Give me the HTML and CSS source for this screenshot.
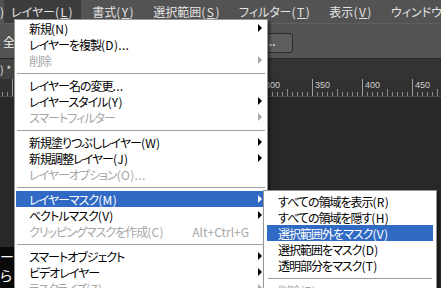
FILE: index.html
```html
<!DOCTYPE html>
<html>

	<head>
		<meta charset="UTF-8">
		<title></title>
		<link rel="stylesheet" href="styles.css">
	</head>

	<body>
		<div class="app">
			<div class="menubar">
				<span class="cut">)</span>
				<span class="item on">レイヤー<span class="k">(<u>L</u>)</span></span>
				<span class="item">書式<span class="k">(<u>Y</u>)</span></span>
				<span class="item">選択範囲<span class="k">(<u>S</u>)</span></span>
				<span class="item">フィルター<span class="k">(<u>T</u>)</span></span>
				<span class="item">表示<span class="k">(<u>V</u>)</span></span>
				<span class="item">ウィンドウ<span class="k">(<u>W</u>)</span></span>
			</div>
			<div class="options">
				<span class="opt-text">全</span>
				<span class="opt-btn">...</span>
			</div>
			<div class="tabs">
				<span class="tab">) *</span>
			</div>
			<div class="ruler">
				<div class="marks">
					<span>0</span>
					<span>50</span>
					<span>100</span>
					<span>150</span>
					<span>200</span>
					<span>250</span>
					<span>300</span>
					<span>350</span>
					<span>400</span>
					<span>450</span>
				</div>
			</div>
			<div class="canvas">
				<div class="layer">ー<br>ら</div>
			</div>

			<ul class="menu main">
				<li><span class="t">新規<span class="k">(N)</span></span><i class="arr"></i></li>
				<li><span class="t">レイヤーを複製<span class="k">(D)...</span></span></li>
				<li class="off"><span class="t">削除</span><i class="arr"></i></li>
				<li class="sep"></li>
				<li><span class="t">レイヤー名の変更<span class="k">...</span></span></li>
				<li><span class="t">レイヤースタイル<span class="k">(Y)</span></span><i class="arr"></i></li>
				<li class="off"><span class="t">スマートフィルター</span><i class="arr"></i></li>
				<li class="sep"></li>
				<li><span class="t">新規塗りつぶしレイヤー<span class="k">(W)</span></span><i class="arr"></i></li>
				<li><span class="t">新規調整レイヤー<span class="k">(J)</span></span><i class="arr"></i></li>
				<li class="off"><span class="t">レイヤーオプション<span class="k">(O)...</span></span></li>
				<li class="sep"></li>
				<li class="on"><span class="t">レイヤーマスク<span class="k">(M)</span></span><i class="arr"></i></li>
				<li><span class="t">ベクトルマスク<span class="k">(V)</span></span><i class="arr"></i></li>
				<li class="off"><span class="t">クリッピングマスクを作成<span class="k">(C)</span></span><span class="key">Alt+Ctrl+G</span></li>
				<li class="sep"></li>
				<li><span class="t">スマートオブジェクト</span><i class="arr"></i></li>
				<li><span class="t">ビデオレイヤー</span><i class="arr"></i></li>
				<li class="off"><span class="t">ラスタライズ<span class="k">(Z)</span></span><i class="arr"></i></li>
			</ul>

			<ul class="menu sub">
				<li><span class="t">すべての領域を表示<span class="k">(R)</span></span></li>
				<li><span class="t">すべての領域を隠す<span class="k">(H)</span></span></li>
				<li class="on"><span class="t">選択範囲外をマスク<span class="k">(V)</span></span></li>
				<li><span class="t">選択範囲をマスク<span class="k">(D)</span></span></li>
				<li><span class="t">透明部分をマスク<span class="k">(T)</span></span></li>
				<li class="sep"></li>
				<li class="off"><span class="t">削除<span class="k">(E)</span></span></li>
			</ul>
		</div>
	</body>

</html>
```

FILE: styles.css
```css
* {
	margin: 0;
	padding: 0;
}

body {
	width: 441px;
	height: 288px;
	overflow: hidden;
	background: #282828;
	font-family: "Noto Sans CJK JP", "Liberation Sans", sans-serif;
	font-size: 12px;
	font-feature-settings: "palt" 1;
}

.app {
	position: relative;
	height: 288px;
	display: flex;
	flex-direction: column;
	overflow: hidden;
}

/* menu bar */
.menubar {
	height: 23px;
	flex: none;
	background: #535353;
	color: #e4e4e4;
	display: flex;
	white-space: nowrap;
}

.menubar .k {
	letter-spacing: 1.5px;
}

.menubar .cut {
	width: 14px;
	line-height: 23px;
}

.menubar .item {
	display: flex;
	align-items: center;
	padding: 0 7px 0 7px;
	margin-right: 4px;
}

.menubar .on {
	background: #3d3d3d;
}

.menubar u {
	text-underline-offset: 1px;
}

/* options bar */
.options {
	height: 34px;
	flex: none;
	border-top: 1px solid #5f5f5f;
	border-bottom: 1px solid #262626;
	background: #535353;
	color: #f2f2f2;
	display: flex;
	align-items: center;
}

.opt-text {
	margin-left: 3px;
}

.opt-btn {
	margin: 4px 0 0 233px;
	width: 43px;
	height: 18px;
	border: 1px solid #2b2b2b;
	border-radius: 3px;
	background: #5d5d5d;
	color: #fff;
	text-align: center;
	line-height: 14px;
}

/* document tabs */
.tabs {
	height: 20px;
	flex: none;
	background: #333;
	display: flex;
}

.tab {
	width: 14px;
	overflow: hidden;
	white-space: nowrap;
	background: #424242;
	color: #dcdcdc;
	line-height: 20px;
	font-size: 11px;
}

/* ruler */
.ruler {
	height: 17px;
	flex: none;
	background: #313131;
	border-bottom: 1px solid #4b4b4b;
	overflow: hidden;
}

.marks {
	display: flex;
	height: 17px;
	margin-left: -38px;
	background-image:
		repeating-linear-gradient(to right, #8c8c8c 0 1px, transparent 1px 5px),
		repeating-linear-gradient(to right, transparent 0 25px, #8c8c8c 25px 26px, transparent 26px 50px);
	background-size: 100% 4px, 100% 7px;
	background-position: 0 100%, 0 100%;
	background-repeat: no-repeat;
}

.marks span {
	flex: none;
	width: 50px;
	box-sizing: border-box;
	border-left: 1px solid #a0a0a0;
	padding: 1px 0 0 2px;
	font: 9px "Liberation Sans", sans-serif;
	line-height: 11px;
	color: #cfcfcf;
}

/* canvas */
.canvas {
	flex: 1;
	background: #282828;
}

.layer {
	margin-top: 150px;
	width: 14px;
	height: 41px;
	overflow: hidden;
	background: #0a0a0a;
	color: #fff;
	font-size: 14px;
	line-height: 19px;
}

/* drop-down menus */
.menu {
	position: absolute;
	list-style: none;
	background: #fff;
	border: 1px solid #979797;
	box-sizing: border-box;
	box-shadow: 2px 2px 3px rgba(0, 0, 0, 0.5);
	color: #000;
	letter-spacing: -1px;
}

.menu .k {
	letter-spacing: 0.3px;
}

.main {
	left: 14px;
	top: 19px;
	width: 254px;
	padding: 0 1px;
}

.sub {
	left: 263px;
	top: 190px;
	width: 174px;
	padding: 2px 3px;
}

.menu li {
	height: 16px;
	display: flex;
	align-items: center;
	white-space: nowrap;
}

.main li {
	padding-left: 13px;
}

.sub li {
	padding-left: 11px;
}

.menu .t {
	flex: 1;
}

.menu .off {
	color: #a6a6a6;
}

.menu .on {
	background: #316ac5;
	color: #fff;
}

.menu .sep {
	height: 1px;
	padding: 0;
	margin: 5px 1px 3px;
	background: #a0a0a0;
}

.arr {
	width: 0;
	height: 0;
	margin-right: 4px;
	border-left: 4px solid #000;
	border-top: 4px solid transparent;
	border-bottom: 4px solid transparent;
}

.off .arr {
	border-left-color: #a6a6a6;
}

.on .arr {
	border-left-color: #fff;
}

.key {
	margin-right: 17px;
	letter-spacing: 0;
}
```
